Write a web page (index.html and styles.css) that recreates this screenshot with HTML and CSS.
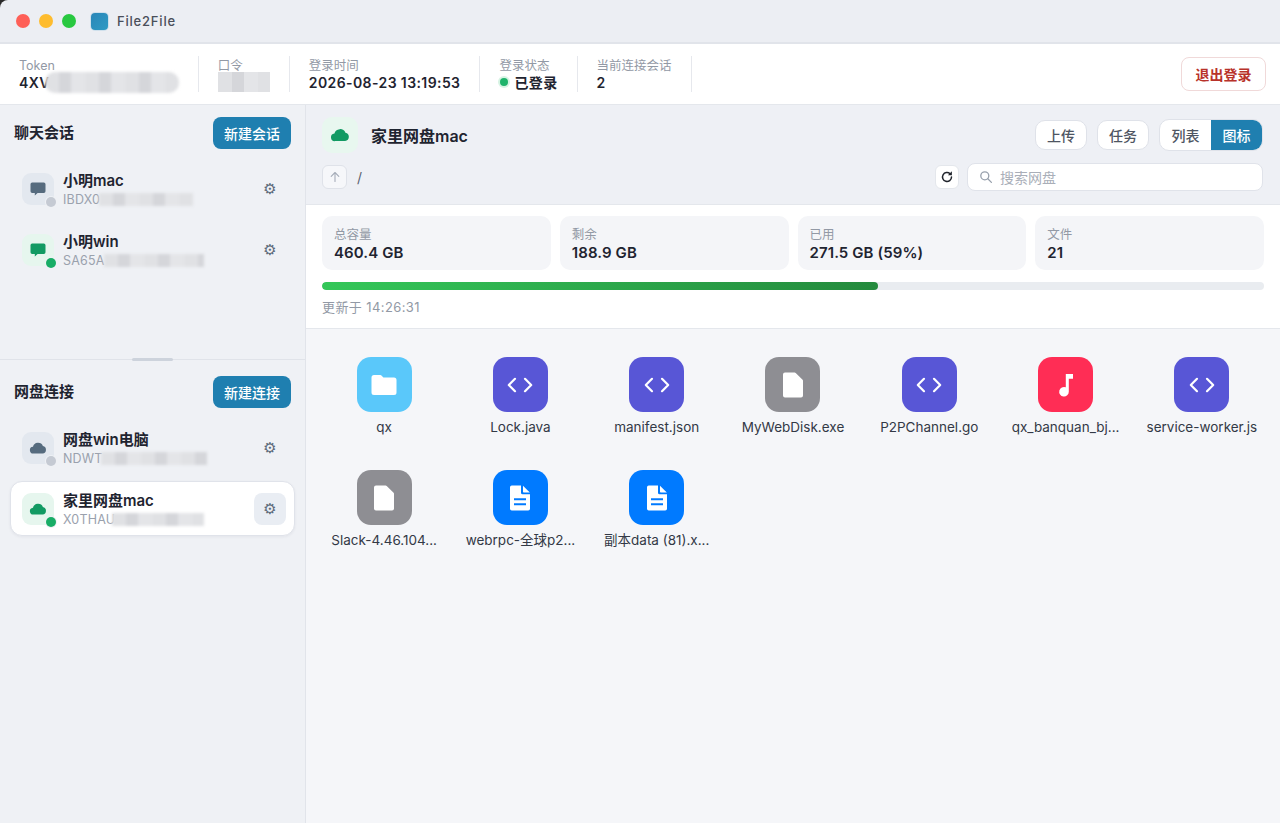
FILE: index.html
```html
<!DOCTYPE html>
<html lang="zh-CN">
<head>
  <meta charset="UTF-8">
  <meta name="viewport" content="width=device-width, initial-scale=1.0">
  <title>File2File</title>
  <link rel="stylesheet" href="styles.css">
</head>
<body>
  <svg class="defs" width="0" height="0">
    <symbol id="i-chat" viewBox="0 0 18 18"><path fill="currentColor" d="M3.200 2.500h11.600A1.700 1.700 0 0 1 16.500 4.200v7.100a1.700 1.700 0 0 1-1.700 1.700H8.600l-2.800 2.400v-2.400H3.200a1.700 1.700 0 0 1-1.700-1.700V4.200a1.700 1.700 0 0 1 1.700-1.700z"/></symbol>
    <symbol id="i-cloud" viewBox="0 0 18 18"><path fill="currentColor" d="M4.600 14.500A3.400 3.400 0 0 1 4 7.700a5.200 5.200 0 0 1 9.900-.7 3.800 3.800 0 0 1-.3 7.500z"/></symbol>
    <symbol id="i-code" viewBox="0 0 28 28"><path fill="none" stroke="currentColor" stroke-width="2.200" stroke-linecap="round" stroke-linejoin="round" d="M9 7.800 2.800 14 9 20.200M19 7.800 25.200 14 19 20.200"/></symbol>
    <symbol id="i-file" viewBox="0 0 28 28"><path fill="currentColor" d="M6 1.500h9.700a1.500 1.500 0 0 1 1 .4l6.900 6.900a1.500 1.500 0 0 1 .4 1v14.700a2 2 0 0 1-2 2H6a2 2 0 0 1-2-2V3.500a2 2 0 0 1 2-2z"/></symbol>
    <symbol id="i-doc" viewBox="0 0 28 28"><path fill="currentColor" fill-rule="evenodd" d="M5.800 1.500h9.200v7.200a1.600 1.600 0 0 0 1.600 1.600H24v14.400a1.800 1.800 0 0 1-1.800 1.800H5.800A1.800 1.800 0 0 1 4 24.700V3.300a1.800 1.800 0 0 1 1.800-1.800zM8 14.300v2h12v-2zm0 5v2h12v-2z"/><path fill="currentColor" d="M17 1.800 23.800 8.500h-6.100a.7.700 0 0 1-.7-.7z"/></symbol>
    <symbol id="i-folder" viewBox="0 0 28 28"><path fill="currentColor" d="M1.500 6.500A2.500 2.500 0 0 1 4 4h6.200a2 2 0 0 1 1.500.7L13.400 6.500H24A2.500 2.500 0 0 1 26.500 9v12.500A2.500 2.500 0 0 1 24 24H4a2.500 2.500 0 0 1-2.500-2.500z"/></symbol>
    <symbol id="i-music" viewBox="0 0 28 28"><path fill="currentColor" d="M13.800 3H21v4.800h-4.200v12.900a4.800 4.800 0 1 1-3-4.400z"/></symbol>
  </svg>

  <div class="titlebar">
    <span class="dot dot-red"></span>
    <span class="dot dot-yellow"></span>
    <span class="dot dot-green"></span>
    <span class="app-logo"></span>
    <span class="app-name">File2File</span>
  </div>

  <header class="infobar">
    <div class="info">
      <div class="info-label">Token</div>
      <div class="info-value">4XV<span class="blur blur-token"></span></div>
    </div>
    <div class="info">
      <div class="info-label">口令</div>
      <div class="info-value"><span class="blur blur-pass"></span></div>
    </div>
    <div class="info">
      <div class="info-label">登录时间</div>
      <div class="info-value">2026-08-23 13:19:53</div>
    </div>
    <div class="info">
      <div class="info-label">登录状态</div>
      <div class="info-value"><span class="status-dot"></span>已登录</div>
    </div>
    <div class="info">
      <div class="info-label">当前连接会话</div>
      <div class="info-value">2</div>
    </div>
    <button class="logout">退出登录</button>
  </header>

  <div class="layout">
    <aside class="sidebar">
      <section class="side-section side-chat">
        <div class="side-head">
          <h2>聊天会话</h2>
          <button class="btn-primary">新建会话</button>
        </div>
        <div class="side-item">
          <span class="item-icon off"><svg width="18" height="18"><use href="#i-chat"/></svg><i class="badge"></i></span>
          <div class="item-text">
            <div class="item-name">小明mac</div>
            <div class="item-sub">IBDX0<span class="blur blur-a"></span></div>
          </div>
          <span class="gear">⚙</span>
        </div>
        <div class="side-item">
          <span class="item-icon on"><svg width="18" height="18"><use href="#i-chat"/></svg><i class="badge"></i></span>
          <div class="item-text">
            <div class="item-name">小明win</div>
            <div class="item-sub">SA65A<span class="blur blur-b"></span></div>
          </div>
          <span class="gear">⚙</span>
        </div>
      </section>
      <div class="side-split"><span class="handle"></span></div>
      <section class="side-section">
        <div class="side-head">
          <h2>网盘连接</h2>
          <button class="btn-primary">新建连接</button>
        </div>
        <div class="side-item">
          <span class="item-icon off"><svg width="18" height="18"><use href="#i-cloud"/></svg><i class="badge"></i></span>
          <div class="item-text">
            <div class="item-name">网盘win电脑</div>
            <div class="item-sub">NDWT<span class="blur blur-c"></span></div>
          </div>
          <span class="gear">⚙</span>
        </div>
        <div class="side-item active">
          <span class="item-icon on"><svg width="18" height="18"><use href="#i-cloud"/></svg><i class="badge"></i></span>
          <div class="item-text">
            <div class="item-name">家里网盘mac</div>
            <div class="item-sub">X0THAU<span class="blur blur-d"></span></div>
          </div>
          <span class="gear">⚙</span>
        </div>
      </section>
    </aside>

    <main class="main">
      <div class="toolbar">
        <div class="toolbar-row">
          <span class="disk-icon"><svg width="20" height="20"><use href="#i-cloud"/></svg></span>
          <h1>家里网盘mac</h1>
          <div class="actions">
            <button class="btn">上传</button>
            <button class="btn">任务</button>
            <div class="segment">
              <button>列表</button>
              <button class="current">图标</button>
            </div>
          </div>
        </div>
        <div class="toolbar-row path-row">
          <button class="up">
            <svg width="12" height="12" viewBox="0 0 12 12"><path fill="none" stroke="currentColor" stroke-width="1.100" stroke-linecap="round" stroke-linejoin="round" d="M6 10.500V1.500M2.200 5.300 6 1.500l3.800 3.800"/></svg>
          </button>
          <span class="path">/</span>
          <button class="refresh">
            <svg width="14" height="14" viewBox="0 0 14 14"><path fill="none" stroke="currentColor" stroke-width="1.500" stroke-linecap="round" d="M11.500 7a4.500 4.500 0 1 1-1.400-3.300"/><path fill="currentColor" d="M11.900 1.200v4h-4z"/></svg>
          </button>
          <div class="search">
            <svg width="14" height="14" viewBox="0 0 14 14"><circle cx="5.800" cy="5.800" r="4" fill="none" stroke="currentColor" stroke-width="1.300"/><path stroke="currentColor" stroke-width="1.300" stroke-linecap="round" d="M8.800 8.800l3.600 3.600"/></svg>
            <span>搜索网盘</span>
          </div>
        </div>
      </div>

      <div class="usage">
        <div class="stats">
          <div class="stat"><div class="stat-label">总容量</div><div class="stat-value">460.4 GB</div></div>
          <div class="stat"><div class="stat-label">剩余</div><div class="stat-value">188.9 GB</div></div>
          <div class="stat"><div class="stat-label">已用</div><div class="stat-value">271.5 GB (59%)</div></div>
          <div class="stat"><div class="stat-label">文件</div><div class="stat-value">21</div></div>
        </div>
        <div class="progress"><div class="progress-fill" style="width: 59%"></div></div>
        <div class="updated">更新于 14:26:31</div>
      </div>

      <div class="files">
        <div class="file"><span class="file-icon folder"><svg width="28" height="28"><use href="#i-folder"/></svg></span><div class="file-name">qx</div></div>
        <div class="file"><span class="file-icon code"><svg width="28" height="28"><use href="#i-code"/></svg></span><div class="file-name">Lock.java</div></div>
        <div class="file"><span class="file-icon code"><svg width="28" height="28"><use href="#i-code"/></svg></span><div class="file-name">manifest.json</div></div>
        <div class="file"><span class="file-icon plain"><svg width="28" height="28"><use href="#i-file"/></svg></span><div class="file-name">MyWebDisk.exe</div></div>
        <div class="file"><span class="file-icon code"><svg width="28" height="28"><use href="#i-code"/></svg></span><div class="file-name">P2PChannel.go</div></div>
        <div class="file"><span class="file-icon music"><svg width="28" height="28"><use href="#i-music"/></svg></span><div class="file-name">qx_banquan_bj...</div></div>
        <div class="file"><span class="file-icon code"><svg width="28" height="28"><use href="#i-code"/></svg></span><div class="file-name">service-worker.js</div></div>
        <div class="file"><span class="file-icon plain"><svg width="28" height="28"><use href="#i-file"/></svg></span><div class="file-name">Slack-4.46.104...</div></div>
        <div class="file"><span class="file-icon doc"><svg width="28" height="28"><use href="#i-doc"/></svg></span><div class="file-name">webrpc-全球p2...</div></div>
        <div class="file"><span class="file-icon doc"><svg width="28" height="28"><use href="#i-doc"/></svg></span><div class="file-name">副本data (81).x...</div></div>
      </div>
    </main>
  </div>
</body>
</html>
```

FILE: styles.css
```css
/* General Reset */
* {
  margin: 0;
  padding: 0;
  box-sizing: border-box;
}

html,
body {
  height: 100%;
  overflow: hidden;
}

body {
  font-family: Inter, "Noto Sans CJK SC", sans-serif;
  color: #1f2430;
  background: #2a2a2a;
  display: flex;
  flex-direction: column;
}

button {
  font-family: inherit;
  cursor: pointer;
}

.defs {
  position: absolute;
}

/* Title bar */
.titlebar {
  height: 44px;
  flex: none;
  display: flex;
  align-items: center;
  padding-left: 16px;
  background: #eceef3;
  border-bottom: 2px solid #e1e4ea;
  border-top-left-radius: 8px;
}

.dot {
  width: 14px;
  height: 14px;
  border-radius: 50%;
  margin-right: 9px;
}

.dot-red { background: #fe5f57; }
.dot-yellow { background: #febc2e; }
.dot-green { background: #28c840; }

.app-logo {
  width: 17px;
  height: 17px;
  margin-left: 6px;
  border-radius: 4px;
  background: linear-gradient(135deg, #2a86b8, #2f9bc4);
  box-shadow: 0 0 0 1px #cfe0ec;
}

.app-name {
  margin-left: 9px;
  font-size: 13px;
  font-weight: 500;
  letter-spacing: 0.8px;
  color: #4a4f5a;
}

/* Info bar */
.infobar {
  height: 61px;
  flex: none;
  display: flex;
  align-items: center;
  padding: 0 14px 0 19px;
  background: #fff;
  border-bottom: 1px solid #e4e7ec;
}

.info {
  height: 36px;
  padding-right: 19px;
  margin-right: 19px;
  border-right: 1px solid #e6e8ed;
}

.info-label {
  font-size: 12.5px;
  line-height: 20px;
  color: #9299a5;
}

.info-value {
  display: flex;
  align-items: center;
  height: 18px;
  margin-top: -3px;
  font-size: 14px;
  font-weight: 600;
  color: #1f2430;
  letter-spacing: 0.4px;
}

.status-dot {
  width: 8px;
  height: 8px;
  margin: 0 6px 0 1px;
  border-radius: 50%;
  background: #1fb36b;
  box-shadow: 0 0 0 2px #d6f3e3;
}

.logout {
  margin-left: auto;
  width: 85px;
  height: 34px;
  font-size: 14px;
  font-weight: 600;
  color: #b8322a;
  background: #fff;
  border: 1px solid #f0d9d9;
  border-radius: 8px;
}

/* Blurred-out values */
.blur {
  display: inline-block;
  flex: none;
  height: 13px;
  background: repeating-linear-gradient(90deg, #e0e1e4 0 14px, #d5d6da 14px 26px, #e4e5e8 26px 40px);
  filter: blur(1.5px);
}

.blur-token { width: 134px; height: 21px; margin-left: -5px; border-radius: 10px; }
.blur-pass { width: 52px; height: 20px; margin-top: -1px; filter: none; }
.blur-a { width: 94px; margin-left: -1px; }
.blur-b { width: 100px; margin-left: -1px; }
.blur-c { width: 106px; margin-left: -2px; }
.blur-d { width: 92px; margin-left: -3px; }

/* Layout */
.layout {
  flex: 1;
  display: flex;
  min-height: 0;
}

.sidebar {
  width: 306px;
  flex: none;
  background: #eff1f5;
  border-right: 1px solid #e1e4ea;
}

.side-chat {
  height: 254px;
}

.side-section {
  padding: 12px 10px 0;
}

.side-head {
  display: flex;
  align-items: center;
  justify-content: space-between;
  height: 32px;
  padding: 0 4px;
  margin-bottom: 12px;
}

.side-head h2 {
  font-size: 15px;
  line-height: 30px;
  font-weight: 600;
  color: #1f2430;
}

.btn-primary {
  width: 78px;
  height: 32px;
  font-size: 14px;
  font-weight: 500;
  color: #fff;
  background: #1f7fb0;
  border: none;
  border-radius: 8px;
}

.side-item {
  height: 55px;
  display: flex;
  align-items: center;
  gap: 9px;
  padding: 0 8px 0 11px;
  margin-bottom: 6px;
  border: 1px solid transparent;
  border-radius: 12px;
}

.side-item.active {
  background: #fff;
  border-color: #e0e3ea;
  box-shadow: 0 1px 3px rgba(30, 40, 60, 0.06);
}

.item-icon {
  position: relative;
  width: 32px;
  height: 32px;
  flex: none;
  display: flex;
  align-items: center;
  justify-content: center;
  border-radius: 9px;
}

.item-icon.off { background: #e3e8ef; color: #566b7e; }
.item-icon.on { background: #e6f6ee; color: #129a63; }

.badge {
  position: absolute;
  right: -2px;
  bottom: -2px;
  width: 10px;
  height: 10px;
  border-radius: 50%;
  box-shadow: 0 0 0 1px #eff1f5;
}

.off .badge { background: #c5cad3; }
.on .badge { background: #18ad66; }

.item-text {
  flex: 1;
  min-width: 0;
  padding-top: 4px;
}

.item-name {
  font-size: 15px;
  line-height: 18px;
  font-weight: 600;
  color: #1f2430;
}

.item-sub {
  display: flex;
  align-items: center;
  height: 19px;
  font-size: 12.5px;
  color: #9aa1ad;
  letter-spacing: 0.2px;
}

.gear {
  width: 32px;
  height: 32px;
  flex: none;
  display: flex;
  align-items: center;
  justify-content: center;
  font-family: "DejaVu Sans", sans-serif;
  font-size: 15px;
  color: #5d6b7a;
  border-radius: 8px;
}

.active .gear {
  background: #e9edf3;
}

.side-split {
  position: relative;
  height: 1px;
  background: #e0e3e9;
}

.handle {
  position: absolute;
  left: 132px;
  top: -1px;
  width: 41px;
  height: 3px;
  border-radius: 2px;
  background: #cdd3dc;
}

.side-split + .side-section {
  padding-top: 16px;
}

/* Main */
.main {
  flex: 1;
  min-width: 0;
  display: flex;
  flex-direction: column;
  background: #f5f6f9;
}

.toolbar {
  height: 100px;
  flex: none;
  padding: 12px 16px 0;
  background: #eef0f5;
  border-bottom: 1px solid #e4e7ec;
}

.toolbar-row {
  display: flex;
  align-items: center;
}

.disk-icon {
  width: 36px;
  height: 36px;
  display: flex;
  align-items: center;
  justify-content: center;
  border-radius: 10px;
  background: #e8f7ef;
  color: #129a63;
}

.toolbar h1 {
  margin-left: 13px;
  font-size: 16px;
  font-weight: 600;
  color: #1f2430;
}

.actions {
  margin-left: auto;
  padding-right: 1px;
  display: flex;
  align-items: center;
  gap: 10px;
}

.btn {
  width: 52px;
  height: 30px;
  font-size: 14px;
  font-weight: 500;
  color: #4e5562;
  background: #fff;
  border: 1px solid #dfe2e9;
  border-radius: 10px;
}

.segment {
  display: flex;
  width: 104px;
  height: 32px;
  background: #fff;
  border: 1px solid #dfe2e9;
  border-radius: 10px;
  overflow: hidden;
}

.segment button {
  flex: 1;
  font-size: 14px;
  font-weight: 500;
  color: #4e5562;
  background: none;
  border: none;
}

.segment .current {
  color: #fff;
  background: #1f7fb0;
}

.path-row {
  margin-top: 10px;
  padding-right: 1px;
}

.up {
  width: 25px;
  height: 24px;
  display: flex;
  align-items: center;
  justify-content: center;
  color: #a6adb9;
  background: #f6f7fa;
  border: 1px solid #dfe2e9;
  border-radius: 6px;
}

.path {
  margin-left: 10px;
  font-size: 14px;
  color: #5b6270;
}

.refresh {
  margin-left: auto;
  width: 24px;
  height: 24px;
  display: flex;
  align-items: center;
  justify-content: center;
  color: #20242c;
  background: #fff;
  border: 1px solid #e4e7ec;
  border-radius: 6px;
}

.search {
  width: 296px;
  height: 28px;
  margin-left: 8px;
  padding-left: 11px;
  display: flex;
  align-items: center;
  gap: 7px;
  font-size: 14px;
  color: #a9aeb8;
  background: #fff;
  border: 1px solid #e0e3ea;
  border-radius: 8px;
}

.search svg {
  color: #98a0ac;
}

/* Usage panel */
.usage {
  height: 124px;
  flex: none;
  padding: 11px 16px 0;
  background: #fff;
  border-bottom: 1px solid #e4e7ec;
}

.stats {
  display: grid;
  grid-template-columns: repeat(4, 1fr);
  gap: 9px;
}

.stat {
  height: 54px;
  padding: 10px 12px 0;
  border-radius: 10px;
  background: #f4f5f8;
}

.stat-label {
  font-size: 12.5px;
  line-height: 17px;
  color: #9299a5;
}

.stat-value {
  font-size: 15px;
  line-height: 20px;
  font-weight: 600;
  color: #1f2430;
  letter-spacing: 0.1px;
}

.progress {
  height: 8px;
  margin-top: 12px;
  border-radius: 4px;
  background: #e9ecf0;
  overflow: hidden;
}

.progress-fill {
  height: 100%;
  border-radius: 4px;
  background: linear-gradient(90deg, #34c759, #248a3d);
}

.updated {
  margin-top: 9px;
  font-size: 13px;
  line-height: 17px;
  letter-spacing: 0.4px;
  color: #9299a5;
}

/* File grid */
.files {
  flex: 1;
  display: grid;
  grid-template-columns: repeat(7, 1fr);
  grid-auto-rows: 99px;
  gap: 14px;
  align-content: start;
  padding: 28px 17px 0;
}

.file {
  min-width: 0;
  display: flex;
  flex-direction: column;
  align-items: center;
}

.file-icon {
  width: 55px;
  height: 55px;
  display: flex;
  align-items: center;
  justify-content: center;
  border-radius: 14px;
  color: #fff;
}

.file-icon.folder { background: #5ac8fa; }
.file-icon.code { background: #5856d6; }
.file-icon.plain { background: #8e8e93; }
.file-icon.music { background: #ff2d55; }
.file-icon.doc { background: #007aff; }

.file-name {
  margin-top: 7px;
  font-size: 13.5px;
  line-height: 16px;
  color: #333946;
  text-align: center;
  white-space: nowrap;
}
```
